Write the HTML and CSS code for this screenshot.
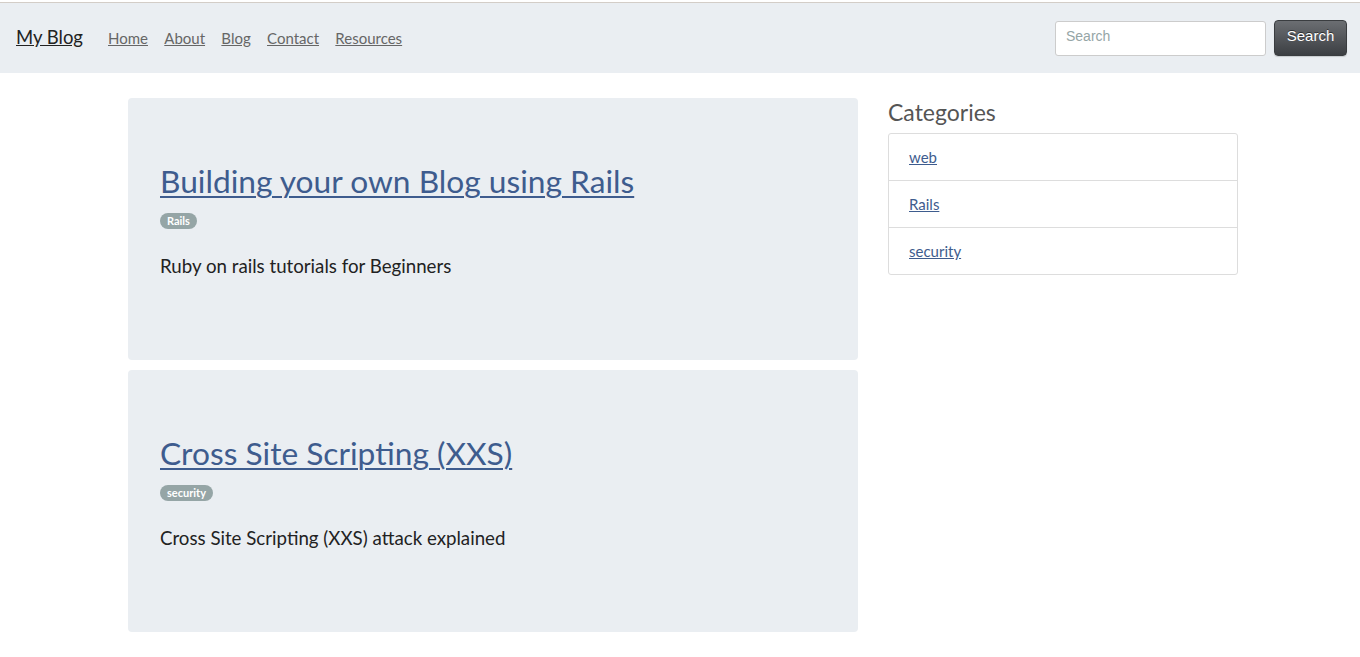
FILE: index.html
```html
<!DOCTYPE html>
<html>
<head>
<meta charset="utf-8">
<title>My Blog</title>
<link rel="stylesheet" href="styles.css">
</head>
<body>
<nav class="navbar">
  <a class="brand" href="#">My Blog</a>
  <ul class="nav-links">
    <li><a href="#">Home</a></li>
    <li><a href="#">About</a></li>
    <li><a href="#">Blog</a></li>
    <li><a href="#">Contact</a></li>
    <li><a href="#">Resources</a></li>
  </ul>
  <form class="search">
    <input type="text" placeholder="Search">
    <button type="button">Search</button>
  </form>
</nav>
<div class="container">
  <main class="posts">
    <article class="post">
      <h1><a href="#">Building your own Blog using Rails</a></h1>
      <div class="tags"><span class="badge">Rails</span></div>
      <p>Ruby on rails tutorials for Beginners</p>
    </article>
    <article class="post">
      <h1><a href="#">Cross Site Scripting (XXS)</a></h1>
      <div class="tags"><span class="badge">security</span></div>
      <p>Cross Site Scripting (XXS) attack explained</p>
    </article>
  </main>
  <aside class="sidebar">
    <h2>Categories</h2>
    <ul class="list-group">
      <li><a href="#">web</a></li>
      <li><a href="#">Rails</a></li>
      <li><a href="#">security</a></li>
    </ul>
  </aside>
</div>
</body>
</html>
```

FILE: styles.css
```css
* { box-sizing: border-box; }
html, body { margin: 0; padding: 0; }
body {
  padding-top: 2px;
  font-family: Lato, "Open Sans", sans-serif;
  color: #222;
  background: #fff;
}
.navbar {
  display: flex;
  align-items: center;
  height: 71px;
  padding: 0 13px 2px 16px;
  background: #eaeef2;
  border-top: 1px solid #d3cdc7;
}
.brand {
  font-size: 18.5px;
  color: #222;
  margin-right: 25px;
  text-decoration: underline;
}
.nav-links {
  display: flex;
  list-style: none;
  margin: 0;
  padding: 0;
  gap: 16.3px;
  flex: 1;
}
.nav-links a {
  font-size: 15px;
  color: #666;
  text-decoration: underline;
}
.search {
  display: flex;
  align-items: center;
  gap: 8px;
  margin-top: 2px;
}
.search input {
  width: 211px;
  height: 35px;
  border: 1px solid #ccc;
  border-radius: 3px;
  padding: 0 10px 4px;
  font-family: "Liberation Sans", Arial, sans-serif;
  font-size: 14px;
  background: #fff;
}
.search input::placeholder { color: #95a5a6; }
.search button {
  width: 73px;
  height: 36px;
  border: 1px solid #3a3d40;
  border-radius: 4px;
  background: linear-gradient(#6b6e72, #3c3f43);
  color: #fff;
  font-family: "Liberation Sans", Arial, sans-serif;
  font-size: 15px;
  text-shadow: 0 -1px 0 rgba(0,0,0,0.5);
  padding: 0 0 5px;
  box-shadow: 0 1px 1px rgba(0,0,0,0.15);
}
.container {
  width: 1110px;
  margin: 25px 0 0 calc(50% - 552px);
  display: flex;
  gap: 30px;
}
.posts {
  width: 730px;
  display: flex;
  flex-direction: column;
  gap: 10px;
}
.post {
  background: #eaeef2;
  border-radius: 4px;
  height: 262px;
  padding: 63px 32px 0;
}
.post h1 {
  margin: 0;
  font-size: 31.7px;
  font-weight: 400;
  line-height: 40px;
}
.post h1 a {
  color: #3e5c8e;
  text-decoration: underline;
  text-decoration-thickness: 2px;
  text-underline-offset: 3px;
}
.tags { margin-top: 10px; line-height: 16px; }
.badge {
  display: inline-block;
  background: #95a5a6;
  color: #fff;
  font-size: 11px;
  font-weight: 700;
  padding: 0 7px;
  height: 16px;
  line-height: 16px;
  border-radius: 8px;
}
.post p {
  margin: 25px 0 0;
  font-size: 18.7px;
  line-height: 24px;
}
.sidebar { width: 350px; }
.sidebar h2 {
  margin: 0 0 7px;
  font-size: 23px;
  font-weight: 400;
  color: #555;
  line-height: 28px;
}
.list-group {
  list-style: none;
  margin: 0;
  padding: 0;
  border: 1px solid #ddd;
  border-radius: 3px;
}
.list-group li {
  height: 47px;
  padding: 0 20px;
  display: flex;
  align-items: center;
  border-top: 1px solid #ddd;
  font-size: 15px;
}
.list-group li:first-child { border-top: 0; height: 46px; }
.list-group a { color: #3e5c8e; text-decoration: underline; }
```
